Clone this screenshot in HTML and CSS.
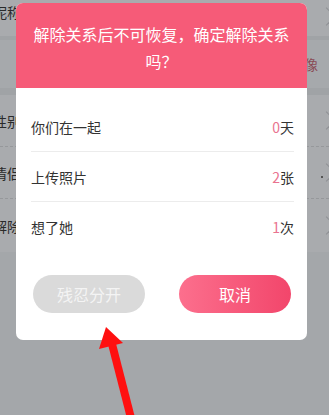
FILE: index.html
```html
<!DOCTYPE html>
<html lang="zh-CN">
<head>
    <meta charset="UTF-8">
    <meta name="viewport" content="width=device-width, initial-scale=1.0">
    <title>解除关系</title>
    <link rel="stylesheet" href="styles.css">
</head>
<body>
    <div class="page">
        <div class="row row-top">
            <span class="label">昵称</span>
            <span class="chevron"></span>
        </div>
        <div class="row row-avatar">
            <span class="label"></span>
            <span class="link">头像</span>
        </div>
        <div class="group">
            <div class="row item">
                <span class="label">性别</span>
                <span class="chevron"></span>
            </div>
            <div class="row item">
                <span class="label">情侣</span>
                <span class="dot"></span>
                <span class="chevron"></span>
            </div>
            <div class="row item">
                <span class="label">解除</span>
                <span class="chevron"></span>
            </div>
        </div>
    </div>

    <div class="dialog">
        <div class="dialog-head">解除关系后不可恢复，确定解除关系吗？</div>
        <div class="dialog-body">
            <ul class="stats">
                <li><span>你们在一起</span><span><em>0</em>天</span></li>
                <li><span>上传照片</span><span><em>2</em>张</span></li>
                <li><span>想了她</span><span><em>1</em>次</span></li>
            </ul>
            <div class="actions">
                <button class="btn btn-leave">残忍分开</button>
                <button class="btn btn-cancel">取消</button>
            </div>
        </div>
    </div>

    <svg class="arrow" width="329" height="415" viewBox="0 0 329 415">
        <line x1="112" y1="344" x2="131" y2="418" stroke="#ff1010" stroke-width="8"/>
        <polygon points="106,327 99,349 123,343" fill="#ff1010"/>
    </svg>
</body>
</html>
```

FILE: styles.css
```css
* {
    margin: 0;
    padding: 0;
    box-sizing: border-box;
}

body {
    width: 329px;
    height: 415px;
    overflow: hidden;
    position: relative;
    background: #a4a7aa;
    font-family: "Noto Sans CJK SC", "Noto Sans", sans-serif;
    color: #2a2a2a;
}

.page {
    background: #a9abae;
}

.row {
    display: flex;
    align-items: center;
    justify-content: space-between;
    font-size: 14px;
}

.label {
    margin-left: -7px;
}

.row-top {
    height: 36px;
    align-items: flex-start;
    padding-top: 2px;
}

.row-top .chevron {
    margin-top: 8px;
}

.row-avatar {
    height: 52px;
    border-top: 4px solid #a0a3a6;
    background: #a6a9ac;
}

.row-avatar .link {
    color: #8a4a55;
    font-size: 14px;
    margin-right: 11px;
}

.group {
    border-top: 7px solid #a0a3a6;
}

.item {
    height: 52px;
    border-bottom: 1px dashed #96989b;
}

.item:last-child {
    border-bottom: none;
    height: 53px;
}

.chevron {
    width: 13px;
    height: 13px;
    border-top: 1px solid #8f9195;
    border-right: 1px solid #8f9195;
    transform: rotate(45deg);
    margin-left: auto;
    margin-right: -4px;
}

.dot {
    width: 2px;
    height: 2px;
    background: #555;
    margin-left: auto;
    margin-right: -302px;
    margin-top: 8px;
}

.dialog {
    position: absolute;
    left: 16px;
    top: 3px;
    width: 291px;
    height: 337px;
    background: #fff;
    border-radius: 7px;
    overflow: hidden;
}

.dialog-head {
    background: #f65b78;
    color: #fff;
    height: 85px;
    padding: 18px 14px 0;
    font-size: 16px;
    line-height: 27px;
    text-align: center;
}

.dialog-body {
    padding: 15px 13px 0 15px;
}

.stats {
    list-style: none;
}

.stats li {
    display: flex;
    justify-content: space-between;
    align-items: center;
    height: 50px;
    border-bottom: 1px solid #ececec;
    font-size: 14px;
    color: #333;
}

.stats li:first-child {
    height: 49px;
}

.stats li:last-child {
    border-bottom: none;
}

.stats em {
    font-style: normal;
    color: #e9738f;
}

.actions {
    display: flex;
    justify-content: space-between;
    margin-top: 23px;
    padding: 0 3px 0 2px;
}

.btn {
    width: 112px;
    height: 38px;
    border: none;
    border-radius: 19px;
    font-family: inherit;
    font-size: 16px;
    color: #fff;
}

.btn-leave {
    background: #dadada;
    color: #f4f4f4;
}

.btn-cancel {
    background: linear-gradient(90deg, #fc6f8d, #f2466b);
}

.arrow {
    position: absolute;
    left: 0;
    top: 0;
}
```
